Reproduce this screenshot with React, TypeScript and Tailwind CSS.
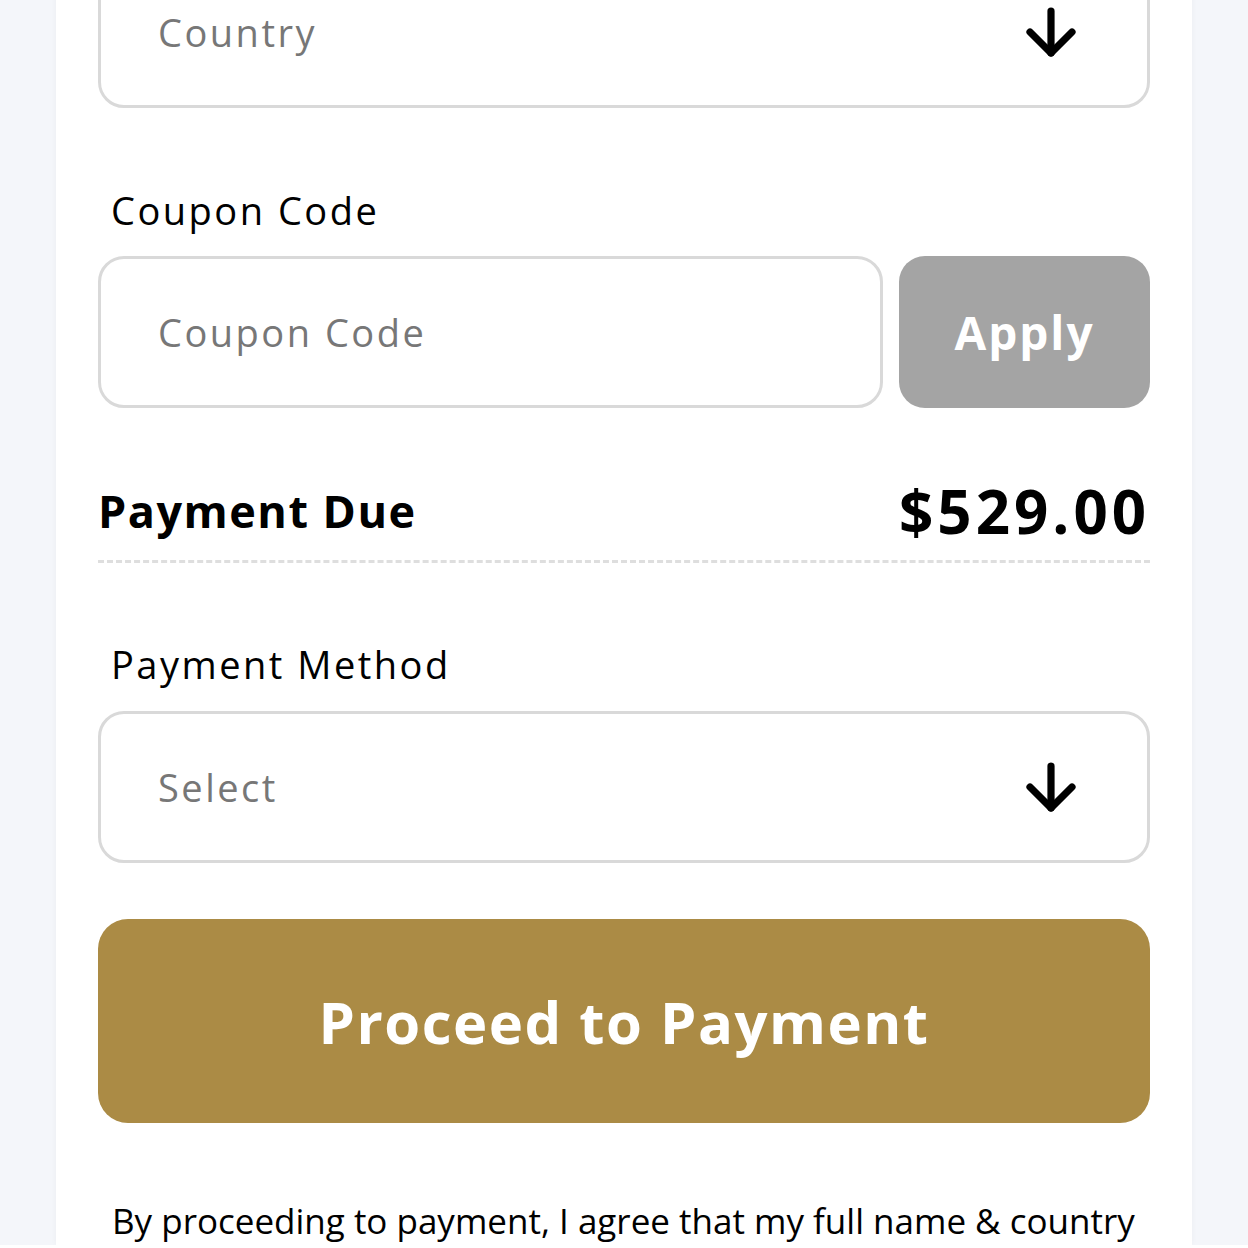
import { ArrowDown } from "lucide-react";

const font = "font-['Open_Sans','Noto_Sans',sans-serif]";

function SelectBox({ text, className = "" }: { text: string; className?: string }) {
  return (
    <div
      className={`flex h-[152px] items-center justify-between rounded-[26px] border-[3px] border-[#d9d9d9] bg-white pl-[57px] pr-[60px] ${className}`}
    >
      <span className="text-[38px] tracking-[2.5px] text-[#777]">{text}</span>
      <ArrowDown size={72} strokeWidth={2.4} className="text-black" />
    </div>
  );
}

export default function App() {
  return (
    <div className={`min-h-screen w-[1248px] bg-[#f4f6fa] ${font}`}>
      <div className="mx-auto w-[1136px] bg-white px-[42px] shadow-[0_0_6px_rgba(0,0,0,0.04)]">
        <SelectBox text="Country" className="-mt-[44px]" />

        <div className="mt-[78px] pl-[13px] text-[38px] leading-[48px] tracking-[2.5px] text-black">Coupon Code</div>
        <div className="mt-[22px] flex gap-[16px]">
          <div className="flex h-[152px] flex-1 items-center rounded-[26px] border-[3px] border-[#d9d9d9] pl-[57px]">
            <span className="text-[38px] tracking-[2.5px] text-[#777]">Coupon Code</span>
          </div>
          <button className="flex h-[152px] w-[251px] items-center justify-center rounded-[26px] bg-[#a4a4a4] text-[46px] font-bold tracking-[2px] text-white">
            Apply
          </button>
        </div>

        <div className="mt-[58px] flex items-center justify-between">
          <span className="text-[45px] font-bold tracking-[1.5px] text-black">Payment Due</span>
          <span className="text-[60px] font-bold tracking-[4px] text-black">$529.00</span>
        </div>
        <div className="mt-[4px] border-t-[3px] border-dashed border-[#dedede]" />

        <div className="mt-[77px] pl-[13px] text-[38px] leading-[48px] tracking-[2.5px] text-black">Payment Method</div>
        <SelectBox text="Select" className="mt-[23px]" />

        <button className="mt-[56px] flex h-[204px] w-full items-center justify-center rounded-[30px] bg-[#ab8b45] text-[58px] font-bold tracking-[1.5px] text-white">
          Proceed to Payment
        </button>

        <p className="mt-[74px] whitespace-nowrap pl-[14px] text-[35px] leading-[48px] text-black">
          By proceeding to payment, I agree that my full name &amp; country
        </p>
      </div>
    </div>
  );
}
